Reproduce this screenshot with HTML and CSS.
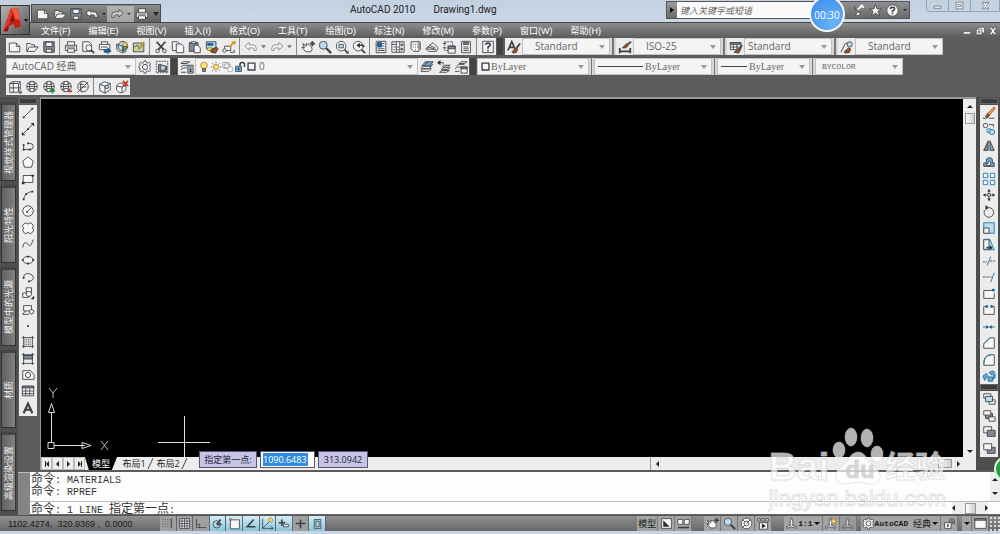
FILE: index.html
```html
<!DOCTYPE html>
<html lang="zh-CN">
<head>
<meta charset="utf-8">
<title>AutoCAD 2010 - Drawing1.dwg</title>
<link rel="stylesheet" href="styles.css">
</head>
<body>
<svg class="sprite" aria-hidden="true">
<symbol id="new" viewBox="0 0 16 16"><path class="p" d="M1.500 3.500h8l4 4v6h-12z"/><path d="M9.500 3.500v4h4"/></symbol>
<symbol id="open" viewBox="0 0 16 16"><path class="p" d="M2 13V4h4l1 1.500h4V8M2 13l3-5h10l-4 5z"/></symbol>
<symbol id="save" viewBox="0 0 16 16"><path class="g" d="M2 2h12v12H3l-1-1z"/><path class="p" d="M4.500 2.500h7v5h-7zM5 10.500h6v3.500H5z"/></symbol>
<symbol id="undo" viewBox="0 0 16 16"><path class="p" d="M1 7l5-4v2.500h4q4 0 4 4V12h-2.500q0-3-2-3H6v2.500z"/></symbol>
<symbol id="redo" viewBox="0 0 16 16"><path class="p" d="M15 7l-5-4v2.500H6q-4 0-4 4V12h2.500q0-3 2-3H10v2.500z"/></symbol>
<symbol id="print" viewBox="0 0 16 16"><path class="p" d="M4 6V2h8v4M1.500 6h13v6h-13z"/><path class="p" d="M4 10h8v4H4z"/><path d="M3 8h10M12 12h2"/></symbol>
<symbol id="preview" viewBox="0 0 16 16"><path class="p" d="M2 2h7l3 3v8H2z"/><circle class="p" cx="9" cy="9" r="3.500"/><path class="w" d="M11.500 11.500L15 15"/></symbol>
<symbol id="publish" viewBox="0 0 16 16"><path class="p" d="M4 5V2h7v3M1.500 5h12v6h-12z"/><path d="M3 8h8"/><path class="bl" d="M7 11h4V9l4 3.500-4 3V14H7z"/></symbol>
<symbol id="globe3" viewBox="0 0 16 16"><circle class="c" cx="9" cy="7" r="5.500"/><path class="y" d="M9 2q5 1 5 6l-5-1z"/><path class="gr" d="M9 7l5 1q-1 4-5 4z"/><path d="M2 4v7l6 4 5-2M2 5l7 2v7"/></symbol>
<symbol id="sheet" viewBox="0 0 16 16"><path class="gf" d="M1.500 3.500h12v10h-12z"/><path d="M3 8l3-2 3 4 3-4"/><path class="yl" d="M7 11l7-9"/></symbol>
<symbol id="cut" viewBox="0 0 16 16"><path class="w" d="M3 2l8 9M13 2L5 11"/><circle cx="4" cy="12.500" r="2"/><circle cx="12" cy="12.500" r="2"/></symbol>
<symbol id="copyc" viewBox="0 0 16 16"><path class="p" d="M1.500 2h6l2 2v8h-8z"/><path class="p" d="M6 4.500h5.500l3 3v7H6z"/></symbol>
<symbol id="paste" viewBox="0 0 16 16"><path class="g" d="M1.500 3h10v10h-10z"/><path class="p" d="M4 2h5v2H4zM7 6h4l3 3v5.500H7z"/></symbol>
<symbol id="match" viewBox="0 0 16 16"><path class="c" d="M1.500 2h11v8h-11z"/><path class="bl" d="M3 4h6v2H3z"/><path class="y" d="M3 9h5v3H3z"/><path class="br" d="M6 12l7-4 2 2-3 5-5-1z"/></symbol>
<symbol id="block" viewBox="0 0 16 16"><path class="p" d="M3 10V7h7v5H4"/><circle class="p" cx="3" cy="12" r="2"/><path d="M9 14h5v-3"/><path class="yl" d="M9 8l3-4M14 1v4M11 3h5"/></symbol>
<symbol id="pan" viewBox="0 0 16 16"><path class="p" d="M2 4l4 3V4l3 1 3 3q2 3-1 5.500H6L3 11l-2-3 3 1z"/><path class="w" d="M13 1v6M10 4h6"/></symbol>
<symbol id="zoom" viewBox="0 0 16 16"><circle class="c" cx="6" cy="6" r="4.500"/><path class="ww" d="M9.500 9.500L15 15"/></symbol>
<symbol id="zoomw" viewBox="0 0 16 16"><circle class="p" cx="7" cy="7" r="5.500"/><path class="c" d="M4.500 5h5v4h-5z"/><path class="w" d="M11 11l2.500 2.500"/><path class="k" d="M15.500 12v3.500H12z"/></symbol>
<symbol id="zoomp" viewBox="0 0 16 16"><circle class="p" cx="7" cy="7" r="5.500"/><path class="w" d="M11 11l4 4M14 8q-1-3-5-2"/><path class="k" d="M5 6l4-3v6z"/></symbol>
<symbol id="props" viewBox="0 0 16 16"><path class="p" d="M2.500 1.500h11v13h-11z"/><path class="bl" d="M4 3h5v5H4z"/><path d="M10 4h2M10 7h2M4 10h8M4 12h8"/></symbol>
<symbol id="dc" viewBox="0 0 16 16"><path class="p" d="M1 2h14v12H1z"/><path d="M6 2v12M10 2v12M1 5h5M7 8h2M7 11h2M11.500 4.500h2v2h-2zM11.500 9.500h2v2h-2zM3 8h2M3 11h2"/></symbol>
<symbol id="pal" viewBox="0 0 16 16"><path class="p" d="M3.500 2h9v11h-6l-3-3z"/><path d="M5.500 5h1M8 5h1M10.500 5h1M5.500 8h1M8 8h1M10.500 8h1M8 11h1M12 1l2 2v8"/></symbol>
<symbol id="ssm" viewBox="0 0 16 16"><path class="p" d="M1 10l8-7 6 6-2 4H4z"/><path d="M1 10l12 1M3 8l8 2M5 6l7 3"/></symbol>
<symbol id="markup" viewBox="0 0 16 16"><path stroke-dasharray="2 1" d="M3 2h9v5M3 2v10h5"/><path class="p" d="M7 7h8v8H7z"/><path class="g" d="M7 7h8v3H7z"/><path d="M1 4h4M1 9h4"/></symbol>
<symbol id="calc" viewBox="0 0 16 16"><path class="p" d="M3 1.500h10v13H3z"/><path class="g" d="M5 3h6v2H5z"/><path d="M5 8h6M5 10h6M5 12h6"/></symbol>
<symbol id="help" viewBox="0 0 16 16"><path class="p" d="M2 1.500h12v13H2z"/><path class="w" d="M5.500 5.500q0-2 2.500-2t2.500 2q0 1-2.500 3V10M8 11.500v1.500"/></symbol>
<symbol id="tstyle" viewBox="0 0 16 16"><path class="w" d="M1 12L5.500 2 10 12M3 8.500h5"/><path class="br" d="M6 13l4-4 2 1-1 4-4 1z"/><path class="w" d="M11 9l4-5"/></symbol>
<symbol id="dstyle" viewBox="0 0 16 16"><path class="w" d="M2 9v6M14 9v6M2 13h12"/><path class="br" d="M5 9l5-5 2 2-3 3z"/><path class="w" d="M11 5l4-3"/></symbol>
<symbol id="tbstyle" viewBox="0 0 16 16"><path class="p" d="M1.500 3h12v8h-12z"/><path class="g" d="M1.500 3h12v2h-12z"/><path d="M5 5v6M9 5v6M2 8h11"/><path class="br" d="M6 14l5-5 2 2-2 4z"/><path class="w" d="M12 10l3-4"/></symbol>
<symbol id="mlstyle" viewBox="0 0 16 16"><path d="M1 14L6 4l4-1"/><circle class="c" cx="11" cy="5" r="3"/><path class="br" d="M5 13l5-4 2 1-1 4-5 1z"/></symbol>
<symbol id="gear" viewBox="0 0 16 16"><path class="p" d="M7 1h2l.5 2 1.500.7 2-1 1.300 1.300-1 2L14 7.500v1l-.7 1.500 1 2L13 13.300l-2-1-1.500.7L9 15H7l-.5-2-1.500-.7-2 1L1.700 12l1-2L1 9V7l1.700-1-1-2L3 2.700l2 1L6.500 3z"/><circle class="p" cx="8" cy="8" r="3"/></symbol>
<symbol id="gearbox" viewBox="0 0 16 16"><path stroke-dasharray="2 1" d="M1.500 1.500h13v13h-13z"/><path class="g" d="M4 5h3l2 2h4v6H4z"/><circle class="c" cx="9" cy="9" r="3"/></symbol>
<symbol id="layers" viewBox="0 0 16 16"><path class="p" d="M1 4l3-2h7L8 4zM1 8l3-2h5M1 11l3-2h4M1 14h6"/><path class="c" d="M9 6h6v9H9z"/><path d="M10 8h4M10 11h4M10 13h4M12 9v5"/></symbol>
<symbol id="lay1" viewBox="0 0 16 16"><path class="p" d="M1 13l3-3h9l-3 3zM1 10l3-3h9l-3 3z"/><path class="b" d="M2 7l4-5h9l-4 5z"/><path d="M5 7l4-5M11 7l4-2"/></symbol>
<symbol id="lay2" viewBox="0 0 16 16"><path class="p" d="M3 14l3-2h8l-3 2zM5 11l2-2h8l-3 2zM6 8l2-2h7l-3 2z"/><path d="M2 3h5v2"/><path class="k" d="M4 0v6L0 3z"/></symbol>
<symbol id="lay3" viewBox="0 0 16 16"><path class="p" d="M6 4l2-2h7l-3 2zM3 7l2-2h7M1 10l3-2h5M1 13h5"/><path class="p" d="M8 8h7v7H8z"/><path class="g" d="M8 8h7v2H8z"/></symbol>
<symbol id="bulb" viewBox="0 0 16 16"><circle class="y" cx="8" cy="6" r="4.500"/><path class="g" d="M6 10h4v4H6z"/></symbol>
<symbol id="sun" viewBox="0 0 16 16"><circle class="y" cx="8" cy="8" r="3.500"/><path d="M8 1v2M8 13v2M1 8h2M13 8h2M3 3l1.500 1.500M11.500 11.500L13 13M13 3l-1.500 1.500M3 13l1.500-1.500"/></symbol>
<symbol id="vpf" viewBox="0 0 16 16"><g opacity=".5"><path class="p" d="M1 2h8v7H1zM3 4h8v6H3z"/><circle class="p" cx="11" cy="11" r="3.500"/></g></symbol>
<symbol id="lock" viewBox="0 0 16 16"><path class="b" d="M2 7h8v7H2z"/><path class="w" d="M8 7V4q0-2 3-2t3 2v4M6 9v3"/></symbol>
<symbol id="lockg" viewBox="0 0 16 16"><path class="p" d="M2 7h8v7H2z"/><path d="M8 7V4q0-2 3-2t3 2v4h-2V5q-1-1-2 0v2"/><path class="w" d="M6 9v3"/></symbol>
<symbol id="sq" viewBox="0 0 16 16"><path class="p w" d="M3 3h10v10H3z"/></symbol>
<symbol id="cube" viewBox="0 0 16 16"><path class="p" d="M2 4l3-2h9v9l-2 3H2z"/><path d="M2 4h10v10M12 4l2-2M6 2v12M2 9h12"/><path class="k" d="M15.500 12v3.500H12z"/></symbol>
<symbol id="globe" viewBox="0 0 16 16"><circle class="p" cx="8" cy="7.500" r="6"/><path d="M3 4q5 3 10 0M3 11q5-3 10 0M2 7.500h12M6 2q-2 6 0 11M10 2q2 6 0 11"/></symbol>
<symbol id="globeadd" viewBox="0 0 16 16"><use href="#globe"/><path class="grl" d="M12 9v6M9 12h6"/></symbol>
<symbol id="globedel" viewBox="0 0 16 16"><use href="#globe"/><path class="rl" d="M10 13h5"/></symbol>
<symbol id="globeoff" viewBox="0 0 16 16"><circle class="p" cx="8" cy="7.500" r="6"/><path d="M2 14L14 2M4 5h5M4 8h8M6 2q-2 6 0 11"/></symbol>
<symbol id="box" viewBox="0 0 16 16"><path class="p" d="M2 5l5-3 7 2v7l-6 4-6-3z"/><path d="M2 5l6 2v8M8 7l6-3"/><circle class="c" cx="10" cy="8" r="2"/></symbol>
<symbol id="boxx" viewBox="0 0 16 16"><circle class="p" cx="7" cy="9" r="5.500"/><path d="M2 7l6 1v6M8 8l5-2"/><path class="rl" d="M9 1l6 6M15 1L9 7"/></symbol>
<symbol id="line" viewBox="0 0 16 16"><path d="M3 13L13 3"/><path class="k" d="M2 12h2v2H2zM12 2h2v2h-2z"/></symbol>
<symbol id="xline" viewBox="0 0 16 16"><path d="M3 13L13 3"/><path class="k" d="M1 15v-4l4 4zM15 1v4l-4-4zM7 7h2v2H7z"/></symbol>
<symbol id="pline" viewBox="0 0 16 16"><path d="M3 12h7q4 0 4-3.500T10 5H8M3 12V7"/><path class="k" d="M2 11h2v2H2zM7 4h2v2H7zM2 6h2v2H2zM9 11h2v2H9z"/></symbol>
<symbol id="poly" viewBox="0 0 16 16"><path class="p" d="M8 2l6 5-2 7H4L2 7z"/></symbol>
<symbol id="rect" viewBox="0 0 16 16"><path class="p" d="M2.500 4h11v8h-11z"/><path class="k" d="M1 11h3v3H1zM12 3h3v2h-3z"/></symbol>
<symbol id="arc" viewBox="0 0 16 16"><path d="M3 13Q4 5 13 4"/><path class="k" d="M2 12h2v2H2zM5 6h2v2H5zM12 3h2v2h-2z"/></symbol>
<symbol id="circle" viewBox="0 0 16 16"><circle class="p" cx="8" cy="8" r="6"/><path d="M7 9l5-5"/><path class="k" d="M6 8h2v2H6z"/></symbol>
<symbol id="cloud" viewBox="0 0 16 16"><path class="p" d="M8 3.500q3-3 5 0t0 4.500q3 2 0 5t-5 0q-3 3-5 0t0-5q-3-2 0-4.500t5 0z"/></symbol>
<symbol id="spline" viewBox="0 0 16 16"><path d="M2 12q1-7 4-5t4 3 4-7"/></symbol>
<symbol id="ellipse" viewBox="0 0 16 16"><ellipse class="p" cx="8" cy="8" rx="6" ry="4"/><path class="k" d="M7 3h2v2H7zM7 11h2v2H7zM1 7h2v2H1zM13 7h2v2h-2z"/></symbol>
<symbol id="earc" viewBox="0 0 16 16"><path d="M3 9q0-5 5-5t6 4-5 5"/><path class="k" d="M2 8h2v2H2zM8 12h2v2H8z"/></symbol>
<symbol id="insert" viewBox="0 0 16 16"><path class="p" d="M6 2h6v6H6zM2 8h7v5H2z"/><circle class="p" cx="9" cy="9" r="3"/><path class="k" d="M15 11v4h-4z"/></symbol>
<symbol id="mkblock" viewBox="0 0 16 16"><path class="p" d="M3 3h9v6H3z"/><circle class="p" cx="12" cy="10" r="2.500"/><path d="M2 13l3-4M2 13h7"/></symbol>
<symbol id="point" viewBox="0 0 16 16"><path class="k" d="M7 7h2v2H7z"/></symbol>
<symbol id="hatch" viewBox="0 0 16 16"><path d="M3 1v14M13 1v14M1 3h14M1 13h14"/><path stroke-dasharray="1 1" d="M4 5h8M4 7h8M4 9h8M4 11h8"/></symbol>
<symbol id="grad" viewBox="0 0 16 16"><path class="g" d="M3 4h10v4H3z"/><path d="M3 1v14M13 1v14M1 3h14M1 13h14"/></symbol>
<symbol id="region" viewBox="0 0 16 16"><path class="p" d="M2 3h9l4 5v5H2z"/><circle class="p" cx="8" cy="8" r="3"/></symbol>
<symbol id="table" viewBox="0 0 16 16"><path class="p" d="M1.500 2.500h13v11h-13z"/><path class="g" d="M1.500 2.500h13v2h-13z"/><path d="M5.500 5v8M10 5v8M2 8h12M2 11h12"/></symbol>
<symbol id="mtext" viewBox="0 0 16 16"><path class="ww" d="M3 14L8 3l5 11M5 10h6"/></symbol>
<symbol id="erase" viewBox="0 0 16 16"><path class="br" d="M4 12l3-4 2 2-3 4z"/><path class="or" d="M7 8l7-7 1 2-6 7z"/><path d="M1 14h4M8 14h6"/></symbol>
<symbol id="mcopy" viewBox="0 0 16 16"><circle class="p" cx="4" cy="4" r="2.500"/><circle class="c b2" cx="8" cy="10" r="2.500"/><circle class="c b2" cx="11.500" cy="11.500" r="3"/><path d="M8 3h5v3"/></symbol>
<symbol id="mirror" viewBox="0 0 16 16"><path class="g" d="M7 2v11H2z"/><path class="b" d="M9 2v11h5z"/></symbol>
<symbol id="offset" viewBox="0 0 16 16"><path class="b" d="M2 13v-4h3V6q0-3 3.500-3T12 6v3h2v4z"/><path class="p" d="M5 12v-2h2V8q1-2 3 0v4z"/></symbol>
<symbol id="array" viewBox="0 0 16 16"><path class="p b2" d="M1.500 1.500h5v5h-5zM9.500 1.500h5v5h-5zM1.500 9.500h5v5h-5zM9.500 9.500h5v5h-5z"/></symbol>
<symbol id="move" viewBox="0 0 16 16"><path d="M8 2v12M2 8h12"/><path class="k" d="M8 1l2 3H6zM8 15l2-3H6zM1 8l3-2v4zM15 8l-3-2v4z"/><path class="p" d="M6.500 6.500h3v3h-3z"/></symbol>
<symbol id="rotate" viewBox="0 0 16 16"><path d="M8 3a5.500 5.500 0 1 1-5 3"/><path class="k" d="M4 0l4 3-4 3z"/></symbol>
<symbol id="scale" viewBox="0 0 16 16"><path class="c b2" d="M2 2h12v12H2z"/><path class="p" d="M2 8h6v6H2z"/></symbol>
<symbol id="stretch" viewBox="0 0 16 16"><path class="c b2" d="M2 1.500h7l5 12H2z"/><path class="p" d="M2 2h6v11H2z"/><path class="w" d="M5 11h5"/><path class="k" d="M9 8l3 3-3 3z"/></symbol>
<symbol id="trim" viewBox="0 0 16 16"><path class="b2" d="M6 13l4-10"/><path stroke-dasharray="3 1" d="M1 9h5M9 8h6"/></symbol>
<symbol id="extend" viewBox="0 0 16 16"><path class="b2" d="M10 14l4-11"/><path stroke-dasharray="3 1" d="M1 8h10"/></symbol>
<symbol id="brk1" viewBox="0 0 16 16"><path class="p" d="M12 4H2v9h12V7"/><path class="bl" d="M12 2.500h2v2h-2z"/></symbol>
<symbol id="brk2" viewBox="0 0 16 16"><path class="p" d="M4 4H2v9h12V4h-2"/><path class="bl" d="M4.500 3h2v2h-2zM10 3h2v2h-2z"/></symbol>
<symbol id="join" viewBox="0 0 16 16"><path class="b2" d="M1 8h14"/><path class="bl" d="M5 6.500L7 8 5 9.500zM11 6.500L9 8l2 1.500z"/></symbol>
<symbol id="chamfer" viewBox="0 0 16 16"><path class="p" d="M2 14V9l7-7h5v12z"/><path class="b2" d="M2 9l7-7"/></symbol>
<symbol id="fillet" viewBox="0 0 16 16"><path class="p" d="M2 14q0-12 9-12h3v12z"/><path class="b2" d="M2 12Q2 2 11 2"/></symbol>
<symbol id="explode" viewBox="0 0 16 16"><path class="b b2" d="M1 8l4-3 2 3-4 5zM8 4l4-2 3 2-4 3zM7 9h5v5H7zM13 7l2-1v4l-2 2z"/></symbol>
<symbol id="front" viewBox="0 0 16 16"><path class="p" d="M2 2h8v5H2zM8 9h7v5H8z"/><path class="c" d="M4 5h8v6H4z"/></symbol>
<symbol id="back" viewBox="0 0 16 16"><path class="g" d="M4 5h8v6H4z"/><path class="p" d="M2 2h8v5H2zM8 9h7v5H8z"/></symbol>
<symbol id="above" viewBox="0 0 16 16"><path class="p" d="M2 2h9v7H2z"/><path class="g" d="M6 6h9v7H6z"/></symbol>
<symbol id="under" viewBox="0 0 16 16"><path class="g" d="M6 6h9v7H6z"/><path class="p" d="M2 2h9v7H2z"/></symbol>
<symbol id="snap" viewBox="0 0 16 16"><path stroke-dasharray="1 2" d="M2 3h11M2 6h11M2 9h11M2 12h11"/><path d="M13 2v12"/></symbol>
<symbol id="grid" viewBox="0 0 16 16"><path class="p" d="M2 2h12v12H2z"/><path d="M5 2v12M8 2v12M11 2v12M2 5h12M2 8h12M2 11h12"/></symbol>
<symbol id="ortho" viewBox="0 0 16 16"><path d="M3 2v11h12M3 9h4v4"/></symbol>
<symbol id="polar" viewBox="0 0 16 16"><circle cx="7" cy="9" r="4.500"/><path class="w" d="M7 9h6M7 9l5-6"/></symbol>
<symbol id="osnap" viewBox="0 0 16 16"><path class="p" d="M3 3.500h11v11H3z"/><path class="or" d="M2 2h2v2H2z"/></symbol>
<symbol id="otrack" viewBox="0 0 16 16"><path class="w" d="M12 3L4 12h10"/></symbol>
<symbol id="ducs" viewBox="0 0 16 16"><path d="M2 2v12h13M2 14l8-8M12 11l3 3-3 1"/><path class="y" d="M9 3l3-2 3 3-3 3z"/></symbol>
<symbol id="dyn" viewBox="0 0 16 16"><path class="w" d="M6 3v8M2 7h8"/><path class="p" d="M8 9h6v3H8z"/></symbol>
<symbol id="lwt" viewBox="0 0 16 16"><path class="w" d="M8 3v11M2 8h12"/></symbol>
<symbol id="qp" viewBox="0 0 16 16"><path class="c" d="M4 3h8v11H4z"/><path d="M6 5h4v7H6z"/></symbol>
<symbol id="layout" viewBox="0 0 16 16"><path class="p" d="M2 2h12v12H2z"/><path class="k" d="M4 4l8 8H4z"/></symbol>
<symbol id="qlay" viewBox="0 0 16 16"><path class="p" d="M1 3h6v6H1zM9 3h6v6H9z"/><path class="w" d="M1 13h14"/></symbol>
<symbol id="wheel" viewBox="0 0 16 16"><circle class="p" cx="8" cy="8" r="6.500"/><circle cx="8" cy="8" r="3"/><path d="M8 8l5-5M3 13l3-3M3 3l3 3"/></symbol>
<symbol id="motion" viewBox="0 0 16 16"><path class="p" d="M1 2h3v3H1zM6 2h3v3H6zM11 2h3v3h-3zM3 7h10v8H3z"/><path class="k" d="M6 8l5 3-5 3z"/></symbol>
<symbol id="anno" viewBox="0 0 16 16"><path class="p" d="M8 1q3 6 1 9l5 2v2l-6-2-6 2v-2l5-2Q5 7 8 1z"/></symbol>
<symbol id="annoy" viewBox="0 0 16 16"><use href="#anno"/><path class="y" d="M10 1l2 2 3-1-1 3 1 3-3-1-2 2V6L8 4h2z"/></symbol>
<symbol id="clean" viewBox="0 0 16 16"><path class="p" d="M1 2h14v12H1z"/><path class="g" d="M1 2h14v2H1z"/></symbol>
<symbol id="dish" viewBox="0 0 16 16"><path class="p" d="M3 3q0 7 8 8l-3 3H4l2-3Q2 8 3 3z"/><path class="pw" d="M7 7l4-4M10 2h4M12 4h3"/></symbol>
<symbol id="star" viewBox="0 0 16 16"><path class="p" d="M8 1l2 5h5l-4 3 2 6-5-4-5 4 2-6-4-3h5z"/></symbol>
<symbol id="qmark" viewBox="0 0 16 16"><circle class="p" cx="8" cy="8" r="7"/><path class="w" d="M5.500 6q0-2 2.500-2t2.500 2q0 1-2.500 2.500V10M8 11v1.500"/></symbol>
<symbol id="min" viewBox="0 0 16 16"><path class="p" d="M2 9h12v4H2z"/></symbol>
<symbol id="max" viewBox="0 0 16 16"><path class="p" d="M2 2h12v12H2z"/><path d="M5 6h6v4H5z"/></symbol>
<symbol id="rest" viewBox="0 0 16 16"><path class="p" d="M5 2h10v9H5z"/><path class="p" d="M2 5h9v9H2z"/><path d="M5 8h3v3H5z"/></symbol>
<symbol id="x" viewBox="0 0 16 16"><path class="p" d="M2 2h4l2 3 2-3h4l-4 6 4 6h-4l-2-3-2 3H2l4-6z"/></symbol>
</svg>

<div class="app">
<header class="titlebar">
  <div class="quick">
    <button aria-label="新建"><svg><use href="#new"/></svg></button><button aria-label="打开"><svg><use href="#open"/></svg></button><button aria-label="保存"><svg><use href="#save"/></svg></button><button aria-label="放弃"><svg><use href="#undo"/></svg></button><i class="caret"></i><span class="lit"><button aria-label="重做"><svg><use href="#redo"/></svg></button><i class="caret"></i></span><button aria-label="打印"><svg><use href="#print"/></svg></button><i class="caret big"></i>
  </div>
  <h1><span>AutoCAD 2010</span><span>Drawing1.dwg</span></h1>
  <div class="info">
    <button class="expand" aria-label="展开"></button>
    <input type="text" aria-label="搜索" placeholder="键入关键字或短语">
    <div class="infobtns"><button aria-label="通讯中心"><svg><use href="#dish"/></svg></button><button aria-label="收藏夹"><svg><use href="#star"/></svg></button><button aria-label="帮助"><svg><use href="#qmark"/></svg></button><i class="caret"></i></div>
    <div class="timer">00:30</div>
  </div>
  <div class="winbtns"><button aria-label="最小化"><svg><use href="#min"/></svg></button><button aria-label="最大化"><svg><use href="#max"/></svg></button><button aria-label="关闭"><svg><use href="#x"/></svg></button></div>
</header>
<button class="logo" aria-label="菜单浏览器"><svg viewBox="0 1 23 28"><path d="M1 27L9 3l8-1 3 20-6 2-2-5-5 2-1 6z" fill="#c81e14"/><path d="M9 3l8-1 2 13-5-1-2-7z" fill="#f5593f"/><path d="M1 27L9 3l2 5-4 12z" fill="#e5362a"/><path d="M8 17l3-8 2 7z" fill="#6d1714"/><path d="M1 27l6-7 5-1-5 2-1 6z" fill="#8c1510"/></svg><i class="caret"></i></button>
<nav class="menubar">
  <div class="menus"><button>文件(F)</button><button>编辑(E)</button><button>视图(V)</button><button>插入(I)</button><button>格式(O)</button><button>工具(T)</button><button>绘图(D)</button><button>标注(N)</button><button>修改(M)</button><button>参数(P)</button><button>窗口(W)</button><button>帮助(H)</button></div>
  <div class="docbtns"><button aria-label="最小化文档"><svg><use href="#min"/></svg></button><button aria-label="还原文档"><svg><use href="#rest"/></svg></button><button aria-label="关闭文档"><svg><use href="#x"/></svg></button></div>
</nav>

<section class="bars">
  <div class="row">
    <div class="bar"><button aria-label="新建"><svg><use href="#new"/></svg></button><button aria-label="打开"><svg><use href="#open"/></svg></button><button aria-label="保存"><svg><use href="#save"/></svg></button><i class="sep"></i><button aria-label="打印"><svg><use href="#print"/></svg></button><button aria-label="预览"><svg><use href="#preview"/></svg></button><button aria-label="发布"><svg><use href="#publish"/></svg></button><button aria-label="三维DWF"><svg><use href="#globe3"/></svg></button><button aria-label="图纸"><svg><use href="#sheet"/></svg></button><i class="sep"></i><button aria-label="剪切"><svg><use href="#cut"/></svg></button><button aria-label="复制"><svg><use href="#copyc"/></svg></button><button aria-label="粘贴"><svg><use href="#paste"/></svg></button><button aria-label="特性匹配"><svg><use href="#match"/></svg></button><button aria-label="块编辑器"><svg><use href="#block"/></svg></button><i class="sep"></i><button class="dim" aria-label="放弃"><svg><use href="#undo"/></svg></button><i class="caret"></i><button class="dim" aria-label="重做"><svg><use href="#redo"/></svg></button><i class="caret"></i><i class="sep"></i><button aria-label="平移"><svg><use href="#pan"/></svg></button><button aria-label="缩放"><svg><use href="#zoom"/></svg></button><button aria-label="窗口缩放"><svg><use href="#zoomw"/></svg></button><button aria-label="缩放上一个"><svg><use href="#zoomp"/></svg></button><i class="sep"></i><button aria-label="特性"><svg><use href="#props"/></svg></button><button aria-label="设计中心"><svg><use href="#dc"/></svg></button><button aria-label="工具选项板"><svg><use href="#pal"/></svg></button><button aria-label="图纸集"><svg><use href="#ssm"/></svg></button><button aria-label="标记集"><svg><use href="#markup"/></svg></button><button aria-label="计算器"><svg><use href="#calc"/></svg></button><i class="sep"></i><button aria-label="帮助"><svg><use href="#help"/></svg></button></div>
    <i class="grip"></i>
    <div class="bar styles">
      <button aria-label="文字样式"><svg><use href="#tstyle"/></svg></button><label class="combo w88"><select aria-label="文字样式"><option>Standard</option></select></label><i class="sep"></i>
      <button aria-label="标注样式"><svg><use href="#dstyle"/></svg></button><label class="combo w88"><select aria-label="标注样式"><option>ISO-25</option></select></label><i class="sep"></i>
      <button aria-label="表格样式"><svg><use href="#tbstyle"/></svg></button><label class="combo w88 near"><select aria-label="表格样式"><option>Standard</option></select></label><i class="sep"></i>
      <button aria-label="多重引线样式"><svg><use href="#mlstyle"/></svg></button><label class="combo w88"><select aria-label="多重引线样式"><option>Standard</option></select></label>
    </div>
  </div>
  <div class="row">
    <div class="bar"><label class="combo w130"><select aria-label="工作空间"><option>AutoCAD 经典</option></select></label><button aria-label="工作空间设置"><svg><use href="#gear"/></svg></button><button aria-label="我的工作空间"><svg><use href="#gearbox"/></svg></button></div>
    <i class="grip"></i>
    <div class="bar"><button aria-label="图层特性"><svg><use href="#layers"/></svg></button><label class="combo layer"><svg><use href="#bulb"/></svg><svg><use href="#sun"/></svg><svg><use href="#vpf"/></svg><svg><use href="#lock"/></svg><svg class="chip"><use href="#sq"/></svg><select aria-label="图层"><option>0</option></select></label><button aria-label="置为当前"><svg><use href="#lay1"/></svg></button><button aria-label="上一个图层"><svg><use href="#lay2"/></svg></button><button aria-label="图层状态"><svg><use href="#lay3"/></svg></button></div>
    <i class="grip"></i>
    <div class="bar serif"><label class="combo w112"><svg class="chip"><use href="#sq"/></svg><select aria-label="颜色"><option>ByLayer</option></select></label><i class="sep"></i><label class="combo w118"><i class="rule long"></i><select aria-label="线型"><option>ByLayer</option></select></label><i class="sep"></i><label class="combo w93"><i class="rule"></i><select aria-label="线宽"><option>ByLayer</option></select></label><i class="sep"></i><label class="combo w88 plot"><select aria-label="打印样式"><option>BYCOLOR</option></select></label></div>
  </div>
  <div class="row">
    <div class="bar"><button aria-label="视口"><svg><use href="#cube"/></svg></button><button aria-label="地理"><svg><use href="#globe"/></svg></button><button aria-label="添加"><svg><use href="#globeadd"/></svg></button><button aria-label="删除"><svg><use href="#globedel"/></svg></button><button aria-label="关闭"><svg><use href="#globeoff"/></svg></button><i class="sep"></i><button aria-label="附着"><svg><use href="#box"/></svg></button><button aria-label="拆离"><svg><use href="#boxx"/></svg></button></div>
  </div>
</section>

<main class="work">
  <aside class="drawers"><button><span>视觉样式管理器</span></button><button><span>阳光特性</span></button><button><span>模型中的光源</span></button><button><span>材质</span></button><button><span>高级渲染设置</span></button></aside>
  <div class="center">
    <div class="stage">
      <div class="vside">
        <i class="vgrip"></i>
        <div class="vbar draw"><button aria-label="直线"><svg><use href="#line"/></svg></button><button aria-label="构造线"><svg><use href="#xline"/></svg></button><button aria-label="多段线"><svg><use href="#pline"/></svg></button><button aria-label="多边形"><svg><use href="#poly"/></svg></button><button aria-label="矩形"><svg><use href="#rect"/></svg></button><button aria-label="圆弧"><svg><use href="#arc"/></svg></button><button aria-label="圆"><svg><use href="#circle"/></svg></button><button aria-label="修订云线"><svg><use href="#cloud"/></svg></button><button aria-label="样条曲线"><svg><use href="#spline"/></svg></button><button aria-label="椭圆"><svg><use href="#ellipse"/></svg></button><button aria-label="椭圆弧"><svg><use href="#earc"/></svg></button><button aria-label="插入块"><svg><use href="#insert"/></svg></button><button aria-label="创建块"><svg><use href="#mkblock"/></svg></button><button aria-label="点"><svg><use href="#point"/></svg></button><button aria-label="图案填充"><svg><use href="#hatch"/></svg></button><button aria-label="渐变色"><svg><use href="#grad"/></svg></button><button aria-label="面域"><svg><use href="#region"/></svg></button><button aria-label="表格"><svg><use href="#table"/></svg></button><button aria-label="多行文字"><svg><use href="#mtext"/></svg></button></div>
      </div>
      <div class="view">
        <div class="canvas">
          <svg class="ucs" viewBox="0 0 66 66"><path d="M4 54.500h6v6H4zM7.500 54V24M10 57.500h31M4.500 24.500l3-9 3 9zM38 54.500l9 3-9 3z"/><path class="axis" d="M5 0l4 5 4-5M9 5v5M57 53l7 9M64 53l-7 9"/></svg>
          <svg class="cross" viewBox="0 0 52 52"><path d="M0 26.500h52M26.500 0v52"/></svg>
          <div class="dynin"><label for="dx">指定第一点:</label><span class="cell"><input id="dx" type="text" value="1090.6483"></span><output>313.0942</output></div>
        </div>
        <div class="vscroll"><i class="up"></i><i class="thumb"></i><i class="down"></i></div>
        <div class="tabs"><button class="nav" aria-label="第一个"><i class="stop"></i><i class="left"></i></button><button class="nav" aria-label="上一个"><i class="left"></i></button><button class="nav" aria-label="下一个"><i class="right"></i></button><button class="nav" aria-label="最后"><i class="right"></i><i class="stop"></i></button><button class="tab on">模型</button><button class="tab">布局1</button><button class="tab">布局2</button><div class="hscroll"><i class="left"></i><i class="thumb"></i><i class="right"></i></div></div>
      </div>
      <div class="vside edge">
        <i class="vgrip"></i>
        <div class="vbar modify"><button aria-label="删除"><svg><use href="#erase"/></svg></button><button aria-label="复制"><svg><use href="#mcopy"/></svg></button><button aria-label="镜像"><svg><use href="#mirror"/></svg></button><button aria-label="偏移"><svg><use href="#offset"/></svg></button><button aria-label="阵列"><svg><use href="#array"/></svg></button><button aria-label="移动"><svg><use href="#move"/></svg></button><button aria-label="旋转"><svg><use href="#rotate"/></svg></button><button aria-label="缩放"><svg><use href="#scale"/></svg></button><button aria-label="拉伸"><svg><use href="#stretch"/></svg></button><button aria-label="修剪"><svg><use href="#trim"/></svg></button><button aria-label="延伸"><svg><use href="#extend"/></svg></button><button aria-label="打断于点"><svg><use href="#brk1"/></svg></button><button aria-label="打断"><svg><use href="#brk2"/></svg></button><button aria-label="合并"><svg><use href="#join"/></svg></button><button aria-label="倒角"><svg><use href="#chamfer"/></svg></button><button aria-label="圆角"><svg><use href="#fillet"/></svg></button><button aria-label="分解"><svg><use href="#explode"/></svg></button></div>
        <i class="vgrip"></i>
        <div class="vbar order"><button aria-label="前置"><svg><use href="#front"/></svg></button><button aria-label="后置"><svg><use href="#back"/></svg></button><button aria-label="置于对象之上"><svg><use href="#above"/></svg></button><button aria-label="置于对象之下"><svg><use href="#under"/></svg></button></div>
      </div>
    </div>
    <section class="command">
      <i class="cgrip"></i>
      <div class="cbody">
        <div class="history"><div class="lines"><p>命令<code>: MATERIALS</code></p><p>命令<code>: RPREF</code></p></div><div class="cvs"><i class="up"></i><i class="down"></i></div></div>
        <div class="prompt"><p>命令<code>: 1 LINE </code>指定第一点<code>:</code></p><div class="chs"><i class="left"></i><i class="thumb"></i><i class="right"></i></div></div>
      </div>
      <div class="badge"></div>
    </section>
  </div>
</main>

<footer class="status">
  <span class="coords">1102.4274, &nbsp;320.9369 , &nbsp;0.0000</span>
  <div class="toggles"><button aria-label="捕捉"><svg><use href="#snap"/></svg></button><button aria-label="栅格"><svg><use href="#grid"/></svg></button><button aria-label="正交"><svg><use href="#ortho"/></svg></button><button class="on" aria-label="极轴"><svg><use href="#polar"/></svg></button><button class="on" aria-label="对象捕捉"><svg><use href="#osnap"/></svg></button><button class="on" aria-label="对象追踪"><svg><use href="#otrack"/></svg></button><button class="on" aria-label="动态UCS"><svg><use href="#ducs"/></svg></button><button class="on" aria-label="动态输入"><svg><use href="#dyn"/></svg></button><button aria-label="线宽"><svg><use href="#lwt"/></svg></button><button class="on" aria-label="快捷特性"><svg><use href="#qp"/></svg></button></div>
  <div class="sright">
    <button class="txt">模型</button><button aria-label="布局"><svg><use href="#layout"/></svg></button><button aria-label="快速查看"><svg><use href="#qlay"/></svg></button><i class="gap"></i><button aria-label="平移"><svg><use href="#pan"/></svg></button><button aria-label="缩放"><svg><use href="#zoom"/></svg></button><button aria-label="控制盘"><svg><use href="#wheel"/></svg></button><button aria-label="运动"><svg><use href="#motion"/></svg></button><i class="gap"></i><button class="txt"><svg><use href="#anno"/></svg><code>1:1</code><i class="caret"></i></button><button aria-label="注释可见性"><svg><use href="#annoy"/></svg></button><button class="faded" aria-label="自动注释"><svg><use href="#anno"/></svg></button><i class="gap thin"></i><button class="txt"><svg><use href="#gear"/></svg><code>AutoCAD </code>经典<i class="caret"></i></button><button aria-label="锁定"><svg><use href="#lockg"/></svg></button><i class="gap thin"></i><button class="slim" aria-label="状态栏菜单"><i class="caret"></i></button><button aria-label="全屏"><svg><use href="#clean"/></svg></button><i class="sizer"></i>
  </div>
</footer>

<div class="mark">
  <div class="brand"><span>Bai</span><div class="paw"><svg viewBox="0 0 54 58"><ellipse cx="8" cy="23" rx="6" ry="8"/><ellipse cx="20" cy="10" rx="6" ry="9"/><ellipse cx="36" cy="11" rx="6" ry="9"/><ellipse cx="46" cy="27" rx="6" ry="8"/><path d="M27 25q6 0 10 8l9 9q6 7 1 12-4 5-13 2-7-2-14 0-10 3-14-3t3-12l8-8q4-8 10-8z"/></svg><b>du</b></div><span class="cn">经验</span></div>
  <div class="url">jingyan.baidu.com</div>
</div>
</div>
</body>
</html>
```
FILE: styles.css
```css
* { box-sizing: border-box; }
html, body { margin: 0; }
body { font-family: "Open Sans", "Noto Sans CJK SC", sans-serif; font-size: 10px; color: #333; }
button, select, input { font: inherit; color: inherit; border: 0; padding: 0; margin: 0; background: none; border-radius: 0; }
button { display: flex; align-items: center; justify-content: center; white-space: nowrap; }
p, h1 { margin: 0; font-size: inherit; font-weight: normal; }
i { display: block; flex: none; }
.sprite { position: absolute; width: 0; height: 0; }

svg { width: 14px; height: 14px; flex: none; fill: none; stroke: #3c4148; stroke-width: 1; }
.p { fill: #f7f7f7; }
.g { fill: #808896; }
.c { fill: #b9dcee; }
.b { fill: #6fa5cb; }
.b2 { stroke: #1d78a8; }
.y { fill: #ffdf70; stroke: #a08030; }
.gr { fill: #70b860; }
.gf { fill: #bdd7a0; }
.bl { fill: #235b98; stroke: #235b98; }
.br { fill: #8c552f; stroke: #573520; }
.or { fill: #f29b51; stroke: #b25c2d; }
.k { fill: #2b2e33; stroke: none; }
.w { stroke-width: 2; }
.ww { stroke-width: 2.500; }
.yl { stroke: #d49a27; stroke-width: 2; }
.grl { stroke: #208a28; stroke-width: 2; }
.rl { stroke: #c93822; stroke-width: 2; }
.pw { stroke: #ffffff; stroke-width: 2; }

.app { position: relative; display: flex; flex-direction: column; min-height: 100vh; overflow: hidden; background: #5c5c5c; border-bottom: 3px solid #c6d4e6; }
.caret { width: 0; height: 0; margin: 0 2px; border: 3px solid transparent; border-top-color: #555; border-bottom: 0; }

.titlebar { position: relative; display: flex; align-items: flex-start; height: 22px; background: linear-gradient(#c3d0e0, #cbd8e8); }
.quick { display: flex; align-items: center; width: 130px; height: 18px; margin: 4px 0 0 31px; padding-left: 3px; background: linear-gradient(#8b8b8b, #626262); border: 1px solid #4a4a4a; border-bottom: 0; }
.quick button { width: 17px; height: 16px; }
.quick .caret { margin: 0 1px; border-width: 2px; border-bottom: 0; border-top-color: #222; }
.quick .caret.big { border-width: 4px 3px 0; margin-left: 3px; }
.lit { display: flex; align-items: center; height: 16px; padding: 0 2px; background: #c2c2c2; opacity: .7; }
h1 { position: absolute; left: 350px; top: 3px; display: flex; gap: 18px; font-family: Roboto, sans-serif; line-height: 14px; color: #222; }
.info { position: relative; display: flex; height: 18px; margin: 1px 16px 0 auto; border: 1px solid #555; width: 244px; }
.expand { width: 10px; background: linear-gradient(#9a9a9a, #6c6c6c); }
.expand::after { content: ""; border: 3px solid transparent; border-left: 4px solid #111; border-right: 0; }
.info input { flex: 1; min-width: 0; padding-left: 3px; background: #fafafa; font-style: italic; font-size: 9px; }
.info input::placeholder { color: #666; }
.infobtns { display: flex; align-items: center; justify-content: flex-end; width: 80px; background: linear-gradient(#8f8f8f, #6a6a6a); }
.infobtns button { width: 17px; }
.infobtns .caret { border-width: 2px; border-bottom: 0; border-top-color: #222; }
.infobtns svg { width: 13px; height: 13px; }
.timer { position: absolute; left: 142px; top: -6px; width: 36px; height: 36px; border: 2px solid #f4f8fc; border-radius: 50%; background: radial-gradient(circle at 70% 80%, #69b4fa, #3a8bea); color: #fff; font-size: 10px; line-height: 34px; text-align: center; z-index: 3; }
.winbtns { display: flex; width: 74px; height: 12px; border: 1px solid #93a4ba; border-top: 0; border-radius: 0 0 0 4px; }
.winbtns button { width: 22px; border-right: 1px solid #93a4ba; }
.winbtns button:last-child { flex: 1; border: 0; }
.winbtns svg { width: 9px; height: 9px; }
.logo { position: absolute; left: 0; top: 5px; width: 30px; height: 30px; z-index: 2; background: linear-gradient(135deg, #b4b4b4, #555); border: 1px solid #333; }
.logo svg { width: 22px; height: 26px; stroke: none; }
.logo .caret { border-top-color: #111; margin: 0; border-width: 3px 2px 0; }

.menubar { display: flex; justify-content: space-between; height: 16px; padding-left: 41px; border-top: 1px solid #444; background: linear-gradient(#8d8d8d, #5b5b5b); }
.menus { display: flex; gap: 18px; color: #fff; font-family: "Liberation Sans", "Noto Sans CJK SC", sans-serif; font-size: 9px; }
.docbtns { display: flex; padding-right: 1px; }
.docbtns button { width: 13px; }
.docbtns svg { width: 10px; height: 10px; }

.bars { display: flex; flex-direction: column; gap: 3px; padding-bottom: 2px; }
.row { display: flex; padding-left: 6px; height: 17px; }
.bar { display: flex; align-items: stretch; background: #ececec; }
.bar button { width: 17px; height: 17px; }
.bar .caret { align-self: center; margin: 0 2px; border-width: 3px 2px 0; width: 5px; border-top-color: #888; }
.dim { opacity: .55; }
.sep { width: 5px; border: solid #ececec; border-width: 0 2px; background: #888; }
.styles .sep { width: 6px; background: #777; border-color: #d6d6d6; }
.serif .sep { background: #777; border-color: #d6d6d6; }
.grip { width: 6px; margin: 0 1px; background: #444; }
.styles { margin-left: 1px; }
.combo { position: relative; display: flex; align-items: center; background: #f4f4f4; border: 1px solid #c2c2c2; color: #666; }
.combo::after { content: ""; position: absolute; right: 4px; top: 6px; border: 3px solid transparent; border-top: 4px solid #999; border-bottom: 0; }
.combo select { appearance: none; flex: 1; min-width: 0; height: 15px; line-height: 15px; padding-left: 12px; outline: 0; }
.w88 { width: 88px; }
.combo.near select { padding-left: 3px; }
.w130 { width: 130px; }
.combo.w130 select { padding-left: 5px; }
.layer { width: 223px; padding-left: 2px; }
.layer svg { width: 12px; }
.combo .chip { width: 11px; height: 11px; }
.combo.layer select { padding-left: 2px; }
.w112 { width: 112px; padding-left: 2px; }
.w118 { width: 118px; }
.w93 { width: 93px; }
.serif { font-family: "Liberation Serif", serif; }
.serif .combo select { padding-left: 2px; }
.serif .w112 select { padding-left: 0; }
.rule { width: 26px; height: 1px; margin-left: 3px; background: #444; }
.rule.long { width: 45px; }
.serif .plot { font-family: "Liberation Mono", monospace; font-size: 8px; }
.serif .plot select { padding-left: 6px; }

.work { flex: 1; display: flex; min-height: 0; }
.drawers { display: flex; flex-direction: column; gap: 4px; width: 18px; padding: 5px 2px 4px 1px; background: #4e4e4e; }
.drawers button { flex: 1; width: 15px; border: 1px solid #333; border-top: 3px solid #444; background: linear-gradient(90deg, #616161, #808080); color: #f0f0f0; font-size: 9px; }
.drawers span { writing-mode: vertical-rl; text-orientation: sideways; transform: rotate(180deg); line-height: 13px; }
.center { flex: 1; min-width: 0; display: flex; flex-direction: column; }
.stage { flex: 1; display: flex; }
.vside { width: 22px; padding: 1px 3px 0 1px; }
.vside.edge { width: 24px; padding: 1px 2px 0 4px; background: #4e4e4e; }
.vgrip { height: 6px; margin: 0 0 1px; background: #3c3c3c; border: 1px solid #666; }
.vbar { display: flex; flex-direction: column; justify-content: space-between; background: #ececec; }
.vbar button { width: 100%; height: 16px; }
.draw { height: 311px; }
.modify { height: 279px; }
.order { height: 66px; }
.view { flex: 1; display: grid; grid-template: 1fr 13px / 1fr 13px; border-left: 1px solid #999; border-top: 2px solid #999; }
.canvas { position: relative; background: #000; }
.ucs { position: absolute; left: 3px; bottom: 3px; width: 66px; height: 66px; stroke: #ddd; }
.axis { stroke: #bbb; }
.cross { position: absolute; left: 117px; bottom: -11px; width: 52px; height: 52px; stroke: #ddd; clip-path: inset(0 0 11px); }
.dynin { position: absolute; left: 158px; bottom: -11px; display: flex; gap: 3px; height: 17px; z-index: 1; color: #222244; }
.dynin label, .dynin output, .cell { display: flex; align-items: center; justify-content: center; border: 1px solid #555577; background: #c6c4e2; }
.dynin label { width: 58px; font-size: 9px; }
.dynin output { width: 50px; font-size: 9px; }
.dynin .cell { width: 55px; background: #fff; justify-content: flex-start; padding-left: 2px; font-size: 9px; }
.cell input { width: 45px; height: 13px; background: #318be0; color: #fff; }
.vscroll { display: flex; flex-direction: column; align-items: center; padding: 6px 0 4px; background: #ededed; }
.vscroll .thumb { width: 10px; height: 11px; margin: 5px 0 auto; }
.thumb { border: 1px solid #999; background: linear-gradient(90deg, #fff, #ccc); }
.up, .down, .left, .right { width: 0; height: 0; border: 3px solid transparent; }
.up { border-bottom-color: #222; border-top: 0; }
.down { border-top-color: #222; border-bottom: 0; }
.left { border-right-color: #222; border-left: 0; }
.right { border-left-color: #222; border-right: 0; }
.tabs { grid-column: 1 / 3; display: flex; background: #ededed; color: #222; font-size: 9px; }
.nav { width: 11px; border: 1px solid #bbb; }
.stop { width: 1px; height: 6px; background: #222; }
.tab { position: relative; width: 34px; }
.tab::after { content: ""; position: absolute; right: 0; top: 1px; bottom: 1px; border-right: 1px solid #444; transform: skewX(-25deg); }
.tab.on { width: 32px; color: #fff; background: #000; clip-path: polygon(0 0, 100% 0, 84% 100%, 12% 100%); }
.hscroll { display: flex; align-items: center; margin-left: auto; width: 326px; padding: 0 16px 0 5px; border-left: 1px solid #999; }
.hscroll .thumb { width: 14px; height: 9px; margin: 0 5px 0 auto; }

.command { position: relative; display: flex; height: 45px; padding-top: 2px; }
.cgrip { width: 12px; border-top: 1px solid #bbb; background: #858585; }
.cbody { flex: 1; background: #fdfdfd; color: #333; font-family: "Noto Sans CJK SC", sans-serif; font-size: 12px; line-height: 12px; border-bottom: 1px solid #666; }
.cbody code, .status code { font-family: "Liberation Mono", monospace; font-size: 10px; line-height: 1px; white-space: pre; }
.history { display: flex; justify-content: space-between; height: 30px; padding-left: 1px; border-bottom: 1px solid #bbb; }
.cvs { display: flex; flex-direction: column; justify-content: space-around; align-items: center; width: 10px; background: #eee; }
.prompt { display: flex; justify-content: space-between; padding-left: 1px; }
.chs { display: flex; align-items: center; justify-content: space-between; width: 36px; height: 12px; margin-right: 12px; background: #eee; }
.chs .thumb { width: 11px; height: 11px; }
.badge { position: absolute; right: -20px; top: -14px; width: 26px; height: 26px; border: 2px solid #ddf3df; border-radius: 50%; background: #27a044; }

.status { display: flex; align-items: center; height: 16px; padding-left: 8px; border-top: 1px solid #555; background: linear-gradient(#8f8f8f, #686868); color: #1a1a1a; }
.coords { width: 152px; font-family: "Liberation Sans", sans-serif; font-size: 9px; }
.toggles { display: grid; grid-template-columns: repeat(10, 1fr); width: 166px; height: 15px; }
.toggles button { border-right: 1px solid #666; background: #a0a0a0; }
.toggles .on { background: linear-gradient(#d5eef7, #88c4dc); }
.toggles svg, .sright svg { width: 13px; height: 13px; }
.sright { display: flex; margin-left: auto; height: 15px; }
.sright button { width: 17px; background: #a4a4a4; border-right: 1px solid #777; }
.sright .txt { width: auto; padding: 0 1px; font-size: 9px; }
.sright .txt code { font-size: 8px; font-weight: bold; }
.sright .caret { margin: 0 1px; border-top-color: #111; }
.sright .slim { width: 10px; }
.gap { width: 12px; }
.gap.thin { width: 4px; }
.faded { opacity: .7; }
.sizer { width: 11px; background: radial-gradient(circle, #ddd 1px, transparent 1px) 0 0 / 4px 4px; }

.mark { position: absolute; right: 54px; bottom: 18px; z-index: 4; color: rgba(255, 255, 255, .7); font-family: "Liberation Sans", "Noto Sans CJK SC", sans-serif; pointer-events: none; -webkit-text-stroke: 1px rgba(205, 205, 205, .6); }
.brand { display: flex; align-items: flex-end; height: 58px; font-size: 39px; line-height: 36px; font-weight: bold; }
.paw { position: relative; width: 54px; height: 58px; margin-left: 2px; }
.paw svg { width: 54px; height: 58px; fill: rgba(255, 255, 255, .7); stroke: rgba(205, 205, 205, .5); }
.paw b { position: absolute; left: 14px; bottom: 3px; font-size: 24px; line-height: 24px; color: rgba(190, 190, 190, .6); }
.cn { font-size: 30px; }
.url { font-size: 22px; line-height: 28px; }
```
